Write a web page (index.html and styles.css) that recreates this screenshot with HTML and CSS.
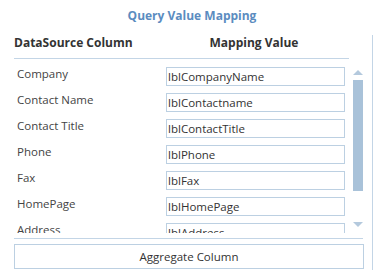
FILE: index.html
```html
<!DOCTYPE html>
<html lang="en">
<head>
  <meta charset="UTF-8" />
  <title>Query Value Mapping</title>
  <link rel="stylesheet" href="styles.css">
</head>
<body>

  <h1 class="title">Query Value Mapping</h1>

  <section class="mapping">
    <div class="mapping-head">
      <span class="col-source">DataSource Column</span>
      <span class="col-value">Mapping Value</span>
    </div>

    <div class="mapping-scroll">
      <div class="rows">
        <div class="row"><label>Company</label><input type="text" value="lblCompanyName"></div>
        <div class="row"><label>Contact Name</label><input type="text" value="lblContactname"></div>
        <div class="row"><label>Contact Title</label><input type="text" value="lblContactTitle"></div>
        <div class="row"><label>Phone</label><input type="text" value="lblPhone"></div>
        <div class="row"><label>Fax</label><input type="text" value="lblFax"></div>
        <div class="row"><label>HomePage</label><input type="text" value="lblHomePage"></div>
        <div class="row"><label>Address</label><input type="text" value="lblAddress"></div>
      </div>

      <!-- fake scrollbar -->
      <div class="scrollbar">
        <span class="arrow-up"></span>
        <span class="thumb"></span>
        <span class="arrow-down"></span>
      </div>
    </div>

    <div class="mapping-foot">
      <button type="button">Aggregate Column</button>
    </div>
  </section>

</body>
</html>
```

FILE: styles.css
```css
/* Base */
body {
  margin: 0;
  font-family: 'Open Sans', Arial, sans-serif;
  font-size: 11.5px;
  color: #444;
  background: #fff;
}

.title {
  margin: 0;
  padding: 8px 0 0 14px;
  width: 370px;
  height: 35px;
  box-sizing: border-box;
  text-align: center;
  font-size: 12px;
  line-height: 16px;
  font-weight: 700;
  color: #5b8cc0;
}

/* Panel */
.mapping {
  width: 373px;
  height: 235px;
  box-sizing: border-box;
  padding: 0 9px 0 14px;
  border-right: 1px solid #c3d5e6;
}

.mapping-head {
  display: flex;
  width: 335px;
  height: 23px;
  border-bottom: 1px solid #c3d5e6;
  font-size: 12px;
  font-weight: 700;
  color: #333;
  line-height: 14px;
}

.col-source {
  width: 153px;
  padding-top: 1px;
}

.col-value {
  width: 174px;
  text-align: center;
  padding-top: 1px;
}

/* Scroll area */
.mapping-scroll {
  display: flex;
  height: 174px;
}

.rows {
  width: 335px;
  height: 174px;
  overflow: hidden;
  padding-top: 8px;
  box-sizing: border-box;
}

.row {
  display: flex;
  height: 26px;
}

.row label {
  width: 150px;
  padding-left: 3px;
  line-height: 12px;
  padding-top: 1px;
}

.row input {
  width: 180px;
  height: 19px;
  box-sizing: border-box;
  margin: 0;
  padding: 0 1px;
  border: 1px solid #bcd0e2;
  font-family: inherit;
  font-size: 11.5px;
  color: #333;
  outline: none;
}

.scrollbar {
  width: 10px;
  margin-left: 8px;
  display: flex;
  flex-direction: column;
  align-items: center;
  padding-top: 11px;
}

.arrow-up,
.arrow-down {
  width: 0;
  height: 0;
  border-left: 5px solid transparent;
  border-right: 5px solid transparent;
}

.arrow-up {
  border-bottom: 5px solid #b4c9dd;
}

.arrow-down {
  border-top: 5px solid #b4c9dd;
}

.thumb {
  width: 10px;
  height: 111px;
  margin: 5px 0 31px;
  background: #a9c2d9;
}

/* Footer */
.mapping-foot {
  margin-top: 5px;
  padding-top: 5px;
  border-top: 1px solid #c3d5e6;
}

.mapping-foot button {
  display: block;
  width: 350px;
  height: 25px;
  margin: 0;
  border: 1px solid #bcd0e2;
  background: #fff;
  font-family: inherit;
  font-size: 11.5px;
  color: #333;
}
```
